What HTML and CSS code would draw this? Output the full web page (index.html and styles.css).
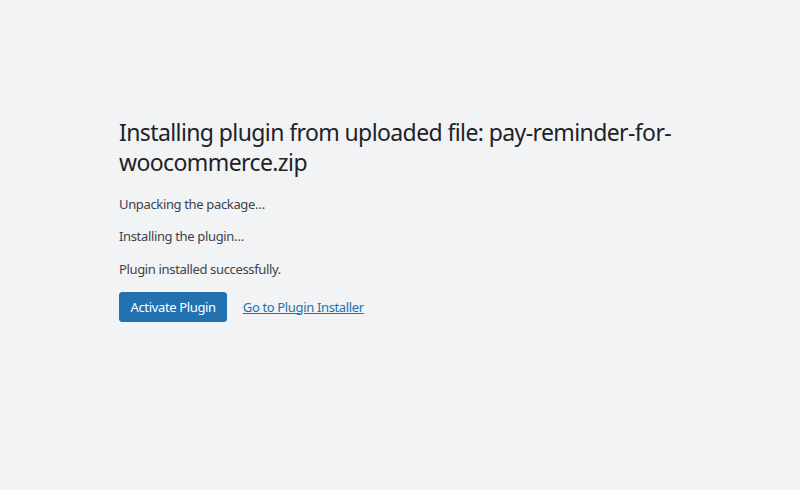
FILE: index.html
```html
<!DOCTYPE html>
<html lang="en">
<head>
<meta charset="utf-8">
<title>Install Plugin</title>
<link rel="stylesheet" href="styles.css">
</head>
<body>
<div class="wrap">
  <h1 class="title">Installing plugin from uploaded file: pay-reminder-for-woocommerce.zip</h1>
  <p class="msg">Unpacking the package…</p>
  <p class="msg">Installing the plugin…</p>
  <p class="msg">Plugin installed successfully.</p>
  <div class="actions">
    <a class="button" href="#">Activate Plugin</a>
    <a class="link" href="#">Go to Plugin Installer</a>
  </div>
</div>
</body>
</html>
```

FILE: styles.css
```css
html, body {
  margin: 0;
  padding: 0;
  background: #f2f3f5;
}
body {
  font-family: "Noto Sans", "Open Sans", sans-serif;
  font-size: 13px;
  line-height: 1.5;
  letter-spacing: -0.35px;
  color: #3c434a;
}
.wrap {
  padding: 109px 100px 0 119px;
}
.title {
  margin: 0;
  padding: 9px 0 4px;
  font-size: 23px;
  font-weight: 400;
  line-height: 1.3;
  letter-spacing: -0.6px;
  color: #1d2327;
}
.msg {
  margin: 13px 0;
}
.actions {
  display: flex;
  align-items: center;
  gap: 16px;
  margin-top: 12px;
}
.button {
  display: inline-flex;
  align-items: center;
  height: 30px;
  box-sizing: border-box;
  padding: 0 10px 0 10.5px;
  border: 1px solid #2271b1;
  border-radius: 3px;
  background: #2271b1;
  color: #fff;
  text-decoration: none;
}
.link {
  color: #2271b1;
  text-decoration: underline;
}
```
